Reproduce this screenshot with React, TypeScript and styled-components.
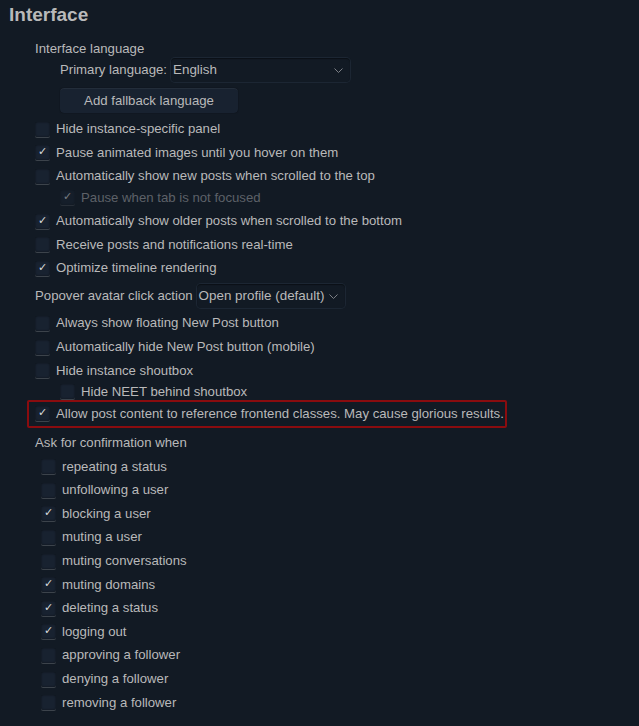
import React from "react";
import styled, { createGlobalStyle, css } from "styled-components";

const GlobalStyle = createGlobalStyle`
  html, body {
    margin: 0;
    padding: 0;
    background: #121a24;
  }
  body {
    font-family: "Liberation Sans", Arial, sans-serif;
    font-size: 13.2px;
    color: #b9b9ba;
  }
  * { box-sizing: border-box; }
`;

const Page = styled.div`
  width: 639px;
  min-height: 726px;
  background: #121a24;
  padding: 3px 0 0 0;
`;

const Title = styled.h2`
  margin: 0 0 15px 9px;
  font-size: 19px;
  line-height: 23px;
  font-weight: bold;
  color: #b9b9ba;
`;

const List = styled.ul<{ $indent?: number; $top?: number }>`
  list-style: none;
  margin: ${(p) => p.$top ?? 0}px 0 0 0;
  padding: 0 0 0 ${(p) => p.$indent ?? 35}px;
`;

const Item = styled.li<{ $gap?: number }>`
  margin-bottom: ${(p) => p.$gap ?? 7.6}px;
  line-height: 16px;
`;

const PlainLabel = styled.div`
  line-height: 16px;
`;

const Row = styled.div`
  display: flex;
  align-items: center;
  gap: 4px;
`;

const CheckLabel = styled.label<{ $disabled?: boolean }>`
  display: flex;
  align-items: center;
  gap: 6px;
  line-height: 16px;
  color: ${(p) => (p.$disabled ? "#5d6168" : "#b9b9ba")};
`;

const Box = styled.span<{ $disabled?: boolean }>`
  position: relative;
  display: inline-block;
  width: 15px;
  height: 15px;
  flex: none;
  border-radius: 2px;
  background: #182230;
  box-shadow: 0 1px 0 0 rgba(255, 255, 255, 0.18), inset 0 0 2px 0 rgba(0, 0, 0, 0.6);
  ${(p) =>
    p.$disabled &&
    css`
      opacity: 0.5;
    `}
`;

const Tick = styled.span`
  position: absolute;
  left: 3px;
  top: -1px;
  font-size: 11px;
  line-height: 16px;
  color: #dcdcdc;
  font-family: "DejaVu Sans", sans-serif;
`;

const SelectBox = styled.div<{ $width: number }>`
  position: relative;
  display: flex;
  align-items: center;
  width: ${(p) => p.$width}px;
  height: 24px;
  padding: 0 2px;
  border-radius: 4px;
  background: #121a24;
  box-shadow: 0 0 0 1px #1c2633, inset 0 1px 1px rgba(0, 0, 0, 0.4);
  color: #b9b9ba;
  font-size: 13.4px;
`;

const Chevron = styled.svg`
  position: absolute;
  right: 7px;
  top: 10px;
`;

const Button = styled.button`
  display: block;
  width: 178px;
  height: 25px;
  margin-top: 6px;
  padding: 0;
  border: none;
  border-radius: 4px;
  background: #182230;
  color: #b9b9ba;
  font-family: inherit;
  font-size: 13.2px;
  box-shadow: 0 0 1px 0 rgba(0, 0, 0, 0.8), inset 0 1px 0 rgba(255, 255, 255, 0.05);
`;

const Highlight = styled.div`
  margin-left: -8px;
  width: 480px;
  padding: 4px 0 4px 6px;
  border: 2px solid #8a0c0f;
  border-radius: 2px;
`;

const Check: React.FC<{ checked?: boolean; disabled?: boolean; label: string }> = ({
  checked,
  disabled,
  label,
}) => (
  <CheckLabel $disabled={disabled}>
    <Box $disabled={disabled}>{checked && <Tick>✓</Tick>}</Box>
    <span>{label}</span>
  </CheckLabel>
);

const Select: React.FC<{ value: string; width: number }> = ({ value, width }) => (
  <SelectBox $width={width}>
    {value}
    <Chevron width="9" height="5" viewBox="0 0 9 5">
      <polyline points="0.5,0.5 4.5,4.5 8.5,0.5" fill="none" stroke="#7d8086" strokeWidth="1" />
    </Chevron>
  </SelectBox>
);

const confirmations: [string, boolean][] = [
  ["repeating a status", false],
  ["unfollowing a user", false],
  ["blocking a user", true],
  ["muting a user", false],
  ["muting conversations", false],
  ["muting domains", true],
  ["deleting a status", true],
  ["logging out", true],
  ["approving a follower", false],
  ["denying a follower", false],
  ["removing a follower", false],
];

export default function App() {
  return (
    <Page>
      <GlobalStyle />
      <Title>Interface</Title>
      <List>
        <Item $gap={8}>
          <PlainLabel>Interface language</PlainLabel>
          <List $indent={25} $top={1}>
            <Item $gap={0}>
              <Row>
                <span>Primary language:</span>
                <Select value="English" width={179} />
              </Row>
              <Button>Add fallback language</Button>
            </Item>
          </List>
        </Item>
        <Item>
          <Check label="Hide instance-specific panel" />
        </Item>
        <Item>
          <Check checked label="Pause animated images until you hover on them" />
        </Item>
        <Item>
          <Check label="Automatically show new posts when scrolled to the top" />
          <List $indent={25} $top={5.5}>
            <Item $gap={0}>
              <Check checked disabled label="Pause when tab is not focused" />
            </Item>
          </List>
        </Item>
        <Item>
          <Check checked label="Automatically show older posts when scrolled to the bottom" />
        </Item>
        <Item>
          <Check label="Receive posts and notifications real-time" />
        </Item>
        <Item $gap={8}>
          <Check checked label="Optimize timeline rendering" />
        </Item>
        <Item $gap={7}>
          <Row>
            <span>Popover avatar click action</span>
            <Select value="Open profile (default)" width={148} />
          </Row>
        </Item>
        <Item>
          <Check label="Always show floating New Post button" />
        </Item>
        <Item>
          <Check label="Automatically hide New Post button (mobile)" />
        </Item>
        <Item $gap={0}>
          <Check label="Hide instance shoutbox" />
          <List $indent={25} $top={5}>
            <Item $gap={0}>
              <Check label="Hide NEET behind shoutbox" />
            </Item>
          </List>
        </Item>
        <Item $gap={7}>
          <Highlight>
            <Check checked label="Allow post content to reference frontend classes. May cause glorious results." />
          </Highlight>
        </Item>
        <Item>
          <PlainLabel>Ask for confirmation when</PlainLabel>
          <List $indent={6} $top={8}>
            {confirmations.map(([label, checked]) => (
              <Item key={label}>
                <Check checked={checked} label={label} />
              </Item>
            ))}
          </List>
        </Item>
      </List>
    </Page>
  );
}
